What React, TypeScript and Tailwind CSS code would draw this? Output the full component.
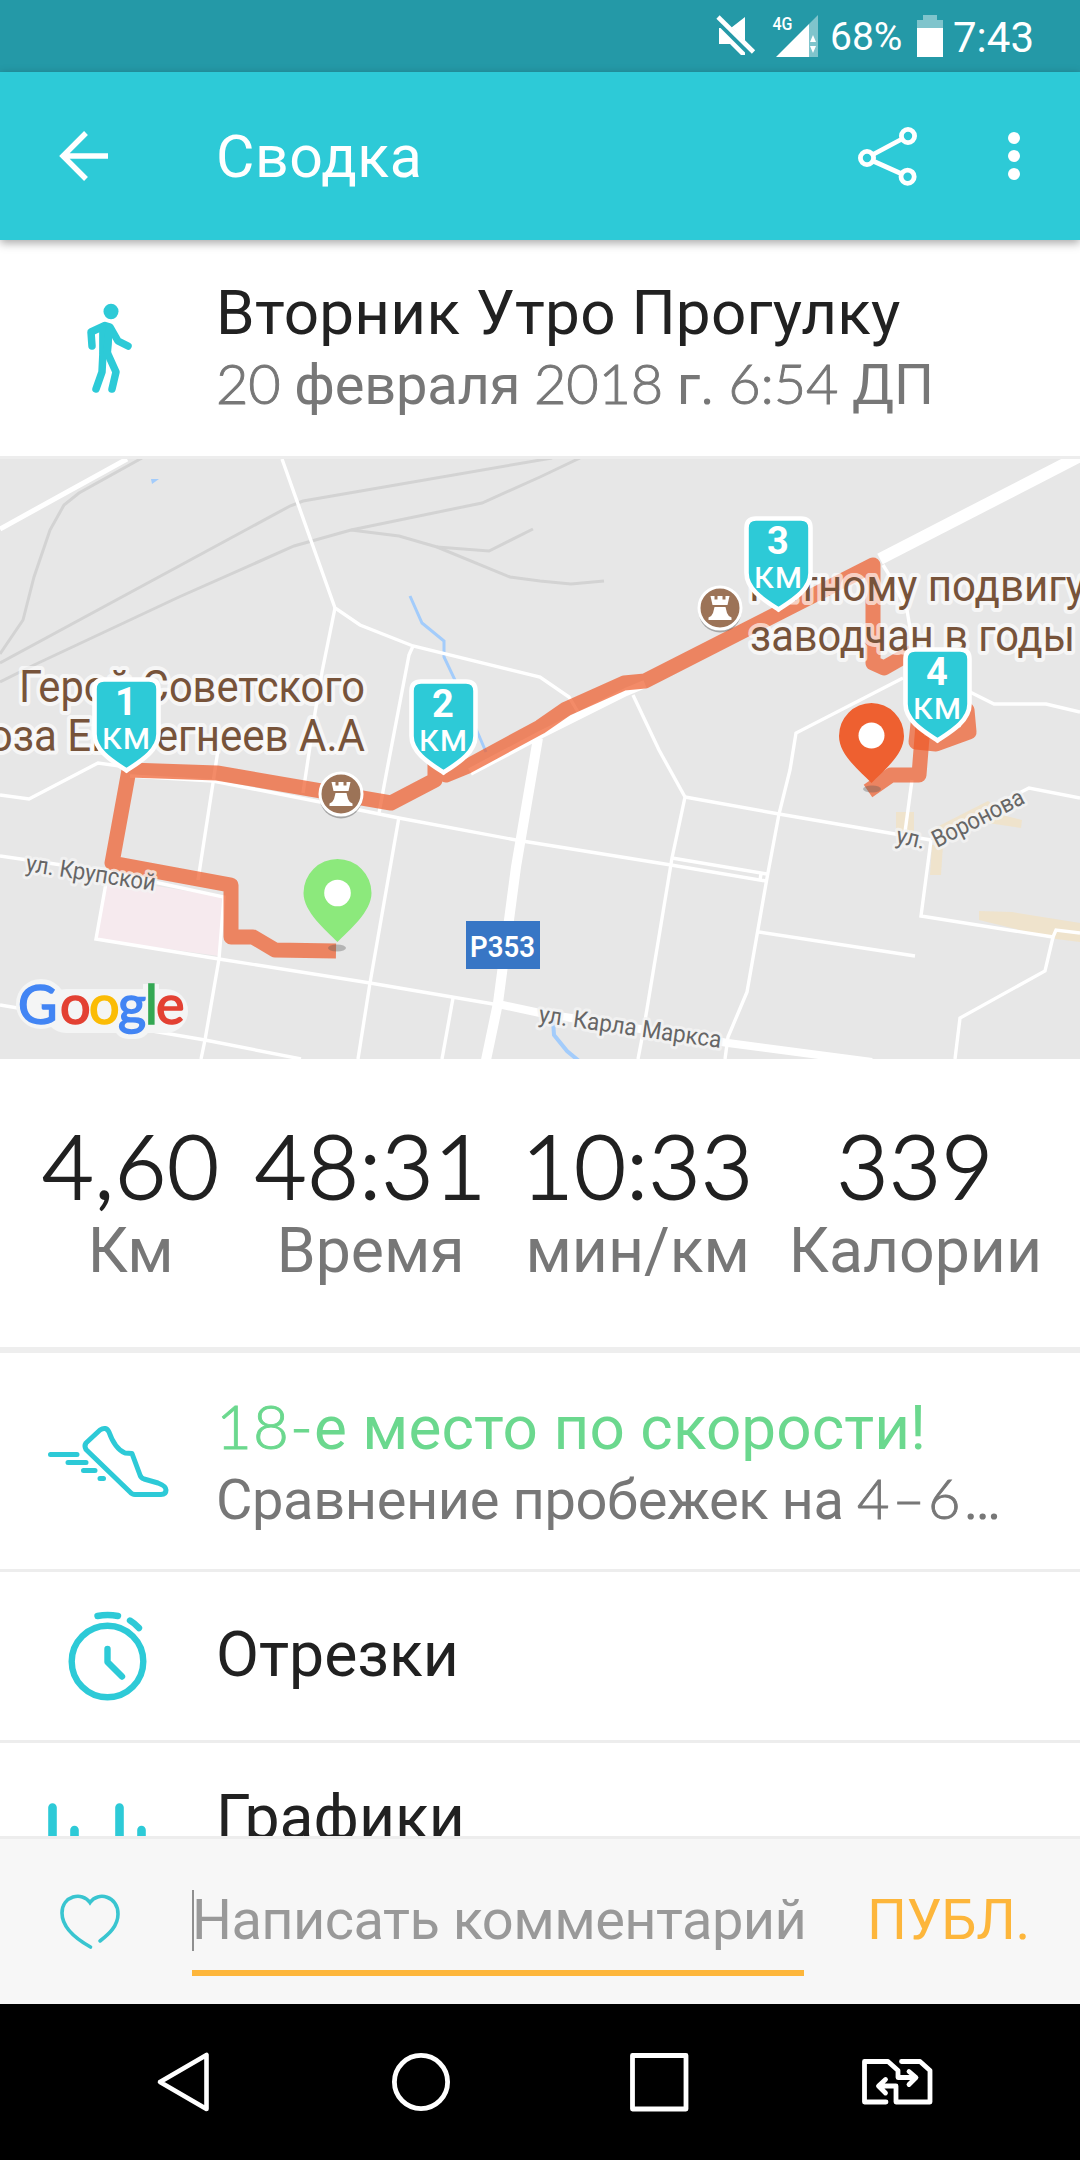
import { Fragment } from 'react'
import type { ReactNode } from 'react'

const TEAL = '#2dcad7'

// Digits and their punctuation use a lighter humanist face than the Cyrillic text
function Mixed({ text, tracking = '' }: { text: string; tracking?: string }) {
  return (
    <>
      {text.split(/([\d:,–-]+)/).map((part, i) =>
        i % 2 === 1 ? (
          <span key={i} className={`font-['Lato',sans-serif] font-light [-webkit-text-stroke:0.9px_currentColor] ${tracking}`}>{part}</span>
        ) : (
          <Fragment key={i}>{part}</Fragment>
        )
      )}
    </>
  )
}

function StatusBar() {
  return (
    <div className="flex h-[72px] shrink-0 items-center justify-end bg-[#2499a7] pr-[45px] text-white">
      <svg className="h-[72px] w-[116px]" viewBox="710 0 116 72">
        <path d="M745 17L731.500 27.500L745 41ZM719 28H720.500L745 52.500V55H741L730 44H719Z" fill="#fff" />
        <path d="M718 17L753.500 52" stroke="#fff" strokeWidth="4.600" />
        <text x="772.500" y="30" fontSize="18" fontWeight="500" fill="#fff" fontFamily="Roboto, sans-serif" textLength="20" lengthAdjust="spacingAndGlyphs">4G</text>
        <path d="M776 57L809 24V57Z" fill="#fff" />
        <path d="M809 24L818 15V57H809Z" fill="#fff" opacity=".42" />
        <path d="M810 42L813 35L816 42ZM810 46H816L813 53Z" fill="#fff" />
      </svg>
      <span className="w-[91px] pt-[3px] pl-1 text-[39px] leading-none whitespace-nowrap">68%</span>
      <svg className="h-[72px] w-[26px]" viewBox="917 0 26 72">
        <path d="M923 15H937V20H943V28H917V20H923Z" fill="#fff" opacity=".42" />
        <rect x="917" y="28" width="26" height="29" fill="#fff" />
      </svg>
      <span className="ml-[10px] w-[82px] pt-[3px] text-[42px] leading-none">7:43</span>
    </div>
  )
}

function Header() {
  return (
    <header className="relative z-10 flex h-[168px] shrink-0 items-center bg-[#2dcad7] text-white shadow-[0_3px_9px_rgba(0,0,0,0.35)]">
      <svg className="h-[168px] w-[216px]" viewBox="0 72 216 168" fill="none" stroke="#fff" strokeWidth="5.400">
        <path d="M108 156H64M86 133L63 156L86 179" />
      </svg>
      <h1 className="flex-1 text-[59px] leading-none tracking-[0.5px]">Сводка</h1>
      <svg className="h-[168px] w-[240px]" viewBox="840 72 240 168">
        <g fill="none" stroke="#fff" strokeWidth="4.800">
          <circle cx="867" cy="158" r="6.600" />
          <circle cx="908" cy="136" r="6.600" />
          <circle cx="907.600" cy="176.700" r="6.600" />
          <path d="M873 154.500L902 139M873 161L902 174" />
        </g>
        <g fill="#fff">
          <circle cx="1014" cy="138" r="6" />
          <circle cx="1014" cy="156" r="6" />
          <circle cx="1014" cy="174" r="6" />
        </g>
      </svg>
    </header>
  )
}

function KmPin({ x, y, n }: { x: number; y: number; n: number }) {
  return (
    <g transform={`translate(${x} ${y})`}>
      <path
        d="M-32 -84q0 -9.500 9.500 -9.500h45q9.500 0 9.500 9.500v45C32 -22 13 -11 0 -2.500C-13 -11 -32 -22 -32 -39Z"
        fill={TEAL}
        stroke="#fff"
        strokeWidth="4.600"
      />
      <text x="-.5" y="-58" fontSize="38" fontWeight="700" textAnchor="middle" fill="#fff">{n}</text>
      <text x="-25" y="-24" fontSize="38" fill="#fff" textLength="49" lengthAdjust="spacingAndGlyphs">км</text>
    </g>
  )
}

function Castle({ x, y }: { x: number; y: number }) {
  return (
    <g transform={`translate(${x} ${y})`}>
      <circle cy="3" r="21.500" fill="#000" opacity=".28" />
      <circle r="21" fill="#9c7357" stroke="#fff" strokeWidth="3" />
      <path d="M-9.500 -12h4v3.500h3v-3.500h5v3.500h3v-3.500h4l-2 9h-15ZM-5.500 -1h11l1.500 6q1 3 4.500 4.500v2.500h-23v-2.500q3.500 -1.500 4.500 -4.500Z" fill="#fff" />
    </g>
  )
}

function GoogleMark() {
  return (
    <g>
      <g fill="none" stroke="#f4f5f5" strokeLinecap="round" strokeLinejoin="round">
        <circle cx="41" cy="1004" r="12" strokeWidth="26" />
        <path d="M66 1011H166" strokeWidth="44" />
        <path d="M128 1024H136" strokeWidth="30" />
        <path d="M151 992V1010" strokeWidth="16" strokeLinecap="square" />
      </g>
      <text y="1023.500" fontSize="54" fontFamily="Lato, sans-serif" strokeWidth="1.600">
        <tspan x="18" fill="#4285f4" stroke="#4285f4">G</tspan>
        <tspan x="60" fill="#e34133" stroke="#e34133">o</tspan>
        <tspan x="89" fill="#fbbc05" stroke="#fbbc05">o</tspan>
        <tspan x="118" fill="#4285f4" stroke="#4285f4">g</tspan>
        <tspan x="145" fill="#34a853" stroke="#34a853">l</tspan>
        <tspan x="156" fill="#e34133" stroke="#e34133">e</tspan>
      </text>
    </g>
  )
}

function RouteMap() {
  return (
    <svg className="block h-[600px] w-full shrink-0" viewBox="0 459 1080 600" fontFamily="Roboto, sans-serif">
      <rect y="459" width="1080" height="600" fill="#e7e7e7" />

      {/* blocks */}
      <path d="M107 878L224 897L219 956L96 939Z" fill="#f6eaee" />
      <g fill="#efe3cc">
        <path d="M896 812H914V836H896Z" />
        <path d="M932 845H943L941 875H930Z" />
        <path d="M929 831L988 801L998 808L935 846Z" />
        <path d="M990 812L1022 820L1021 828L988 823Z" />
        <path d="M979 911L1012 912L1080 923V942L1056 939L979 920Z" />
      </g>

      {/* railways */}
      <g fill="none" stroke="#d3d3d3" strokeWidth="3">
        <path d="M142 458L79 493L64 505L50 530L34 577L23 620L0 654" />
        <path d="M0 663L290 506L303 501L552 458" />
        <path d="M0 682L34 665L179 597L294 546L351 530L482 503L540 477L580 458" />
        <path d="M351 530L399 536L437 547L510 577L540 581L571 584L604 581" />
        <path d="M437 547L489 551L533 529" />
      </g>

      {/* water */}
      <g fill="none" stroke="#a3ccfb" strokeWidth="3">
        <path d="M410 596L422 623L444 641V657L455 680L486 752" />
        <path d="M553 1020L554 1035L567 1051L579 1061" strokeWidth="4" />
      </g>
      <path d="M151 479H159L152 484Z" fill="#a3ccfb" />

      {/* streets */}
      <g fill="none" stroke="#fff" strokeWidth="3.400">
        <path d="M0 529L127 459" strokeWidth="5" />
        <path d="M282 459L335 608L360 625L413 646L540 677L569 697L578 712" />
        <path d="M335 608L322 672L315 713L303 793" />
        <path d="M413 646L409 655L387 770L379 813" />
        <path d="M0 795L29 799L98 763L127 767" />
        <path d="M130 776L213 781L320 802L399 818L516 840L671 865L766 881" />
        <path d="M218 750L213 783L198 880" />
        <path d="M399 817L370 983L358 1059" />
        <path d="M0 856L103 871L224 897L219 959L205 1040L201 1059" />
        <path d="M108 872L96 939L219 959L370 983L499 1005" />
        <path d="M0 1005L205 1040L301 1059" />
        <path d="M453 998L442 1059" />
        <path d="M633 695L659 750L685 797L672 858L643 1033L638 1059" />
        <path d="M685 797L779 814L901 835L931 840" />
        <path d="M903 678L796 733L790 770L779 814L767 878L747 992L728 1037L725 1059" />
        <path d="M672 858L767 874M761 874L760 880" />
        <path d="M759 932L915 956" />
        <path d="M970 692L994 704H1046L1080 712" />
        <path d="M883 565L888 573L907 610L912 640" />
        <path d="M912 780L905 832" />
        <path d="M931 840L921 916L1053 937L1056 930L1080 933" />
        <path d="M1053 937L1045 971L960 1018L955 1059" />
        <path d="M931 838L1029 788L1080 798" />
      </g>
      <g fill="none" stroke="#fff">
        <path d="M538 738L516 867L498 1003L486 1060" strokeWidth="10" />
        <path d="M470 772L540 735L626 692L645 684" strokeWidth="8" />
        <path d="M880 559L1082 455" strokeWidth="12" />
        <path d="M498 1004L540 1013L728 1043L872 1062" strokeWidth="8" />
      </g>

      {/* run route */}
      <g fill="none" stroke="#ee5a28" strokeOpacity=".7" strokeWidth="15" strokeLinejoin="round">
        <path d="M336 951L275 950L253 937H231V885L112 863L129 770L217 773L391 803L435 780V764L446 775L468 766L540 727L566 709L624 683L645 681L873 565V663L884 668L912 652" />
        <path d="M950 690L967 710L969 732L936 744L916 742L919 715" />
        <path d="M924 712L919 775H891L868 791" />
      </g>

      {/* places */}
      <g fontSize="44.500" fill="#77533a" stroke="#fff" strokeOpacity=".65" strokeWidth="8" strokeLinejoin="round" paintOrder="stroke">
        <text x="19" y="702" textLength="346" lengthAdjust="spacingAndGlyphs">Герой Советского</text>
        <text transform="translate(365 751) scale(.945 1)" textAnchor="end">Союза Евстегнеев А.А</text>
        <text transform="translate(749 601) scale(.945 1)">Ратному подвигу</text>
        <text x="750" y="651" textLength="325" lengthAdjust="spacingAndGlyphs">заводчан в годы</text>
      </g>
      <g fontSize="24" fill="#666" stroke="#f4f4f4" strokeOpacity=".8" strokeWidth="6" strokeLinejoin="round" paintOrder="stroke">
        <text transform="translate(25 871) rotate(8.800)" textLength="131" lengthAdjust="spacingAndGlyphs">ул. Крупской</text>
        <text transform="translate(538 1022) rotate(8.100)" textLength="184" lengthAdjust="spacingAndGlyphs">ул. Карла Маркса</text>
        <text transform="translate(895 843) rotate(12)" textLength="29" lengthAdjust="spacingAndGlyphs">ул.</text>
        <text transform="translate(937 848) rotate(-27)" textLength="100" lengthAdjust="spacingAndGlyphs">Воронова</text>
      </g>
      <rect x="466" y="921" width="74" height="48" fill="#3876c5" />
      <text x="470" y="956.500" fontSize="29" fontWeight="600" fill="#fff" textLength="65" lengthAdjust="spacingAndGlyphs">Р353</text>

      <Castle x={341} y={794} />
      <Castle x={720} y={608} />

      {/* start and finish */}
      <ellipse cx="337" cy="948" rx="9" ry="3.500" fill="#555" opacity=".35" />
      <path d="M337.500 942C326 930 303.500 912 303.500 893A34 34 0 0 1 371.500 893C371.500 912 349 930 337.500 942Z" fill="#8ce97c" />
      <circle cx="337.500" cy="893" r="13.300" fill="#fff" />
      <ellipse cx="872" cy="789" rx="9" ry="3.500" fill="#555" opacity=".35" />
      <path d="M871.500 783C860 771 839 755 839 736A32.500 33 0 0 1 904 736C904 755 883 771 871.500 783Z" fill="#ee6030" />
      <circle cx="871.500" cy="735.500" r="13" fill="#fff" />

      <KmPin x={126.5} y={773} n={1} />
      <KmPin x={443.5} y={775} n={2} />
      <KmPin x={778.5} y={612} n={3} />
      <KmPin x={937.5} y={743} n={4} />

      <GoogleMark />
    </svg>
  )
}

const stats = [
  { value: '4,60', label: 'Км' },
  { value: '48:31', label: 'Время' },
  { value: '10:33', label: 'мин/км' },
  { value: '339', label: 'Калории' },
]

function Stats() {
  return (
    <div className="flex h-[288px] shrink-0 justify-between pt-[64px] pr-[38px] pl-[42px]">
      {stats.map((s) => (
        <div key={s.label} className="flex flex-col items-center">
          <span className="font-['Lato',sans-serif] text-[89px] leading-[84px] font-light tracking-[0.8px] text-[#212121] [-webkit-text-stroke:1.8px_currentColor]">
            {s.value}
          </span>
          <span className="text-[62.5px] leading-[88px] text-[#777]">{s.label}</span>
        </div>
      ))}
    </div>
  )
}

function Row({ icon, height, children }: { icon: ReactNode; height: string; children: ReactNode }) {
  return (
    <div className={`flex shrink-0 items-center ${height}`}>
      <div className="h-full w-[216px] shrink-0">{icon}</div>
      <div className="min-w-0 flex-1 text-[#212121]">{children}</div>
    </div>
  )
}

function WalkIcon() {
  return (
    <svg className="h-full w-full" viewBox="0 240 216 216">
      <ellipse cx="111" cy="311.500" rx="7.500" ry="7.800" fill={TEAL} />
      <path d="M105 325L113 327L111 354L99.500 354L99.500 330Z" fill={TEAL} />
      <g fill="none" stroke={TEAL} strokeWidth="7.500" strokeLinecap="round" strokeLinejoin="round">
        <path d="M92 346L91 332L105 325.500L110 327L118 341L128 346" />
        <path d="M103 329V352L102 372L96 389" />
        <path d="M109 330L107 352L116 372L112 389" />
      </g>
    </svg>
  )
}

function ShoeIcon() {
  return (
    <svg className="h-full w-full" viewBox="0 1353 216 216" fill="none" stroke={TEAL} strokeWidth="5" strokeLinecap="round" strokeLinejoin="round">
      <path d="M86 1443L100 1430Q106 1426 109 1432Q115 1449 125 1453L132 1453.500L140 1475Q141 1478 144 1479L158 1483Q166 1486 166 1490Q166 1494.500 161 1494.500H135Q132 1494.500 130 1492L86 1449.500Q84 1446 86 1443Z" />
      <path d="M50.500 1454.500H77M68 1462.500H86M83.500 1470.500H95M100 1478.500H103.500" />
    </svg>
  )
}

function StopwatchIcon() {
  return (
    <svg className="h-full w-full" viewBox="0 1572 216 168" fill="none" stroke={TEAL} strokeWidth="6.400" strokeLinecap="round" strokeLinejoin="round">
      <circle cx="107.500" cy="1661.500" r="35.800" />
      <path d="M97.500 1616Q107.500 1614 118 1616M130 1620.500Q135 1623.500 139 1628M107.500 1649V1662L122 1676.500" />
    </svg>
  )
}

function ChartIcon() {
  return (
    <svg className="h-full w-full" viewBox="0 1743 216 168" fill="none" stroke={TEAL} strokeWidth="8.600" strokeLinecap="round">
      <path d="M52.500 1807.500V1850M74.500 1830V1850M119.500 1807.500V1850M141.500 1830V1850" />
    </svg>
  )
}

function CommentBar() {
  return (
    <div className="flex h-[168px] shrink-0 border-t-[3px] border-[#ededed] bg-[#f7f7f7]">
      <svg className="h-[165px] w-[192px] shrink-0" viewBox="0 1839 192 165" fill="none" stroke="#39c5d0" strokeWidth="3.600" strokeLinecap="round">
        <path d="M90.500 1947C78 1940 62 1929 62 1913C62 1896 82 1891 90 1902.500C98 1891 118 1896 118 1914C118 1926 109 1934 100 1941" />
      </svg>
      <div className="mt-[51px] flex h-[86px] w-[612px] shrink-0 items-start border-b-[6px] border-[#fdb63b]">
        <div className="h-[61px] w-[2px] shrink-0 bg-[#8f8f8f]" />
        <span className="-ml-[2px] text-[56px] leading-[60px] tracking-[-0.55px] whitespace-nowrap text-[#999]">Написать комментарий</span>
      </div>
      <span className="mt-[51px] ml-[63px] text-[56px] leading-[60px] tracking-[-0.4px] text-[#fdb63b]">ПУБЛ.</span>
    </div>
  )
}

function NavBar() {
  return (
    <nav className="flex h-[156px] shrink-0 items-center bg-black pl-[156px]">
      <svg className="h-[64px] w-[54px]" viewBox="156 2050 54 64" fill="none" stroke="#fff" strokeWidth="4.600" strokeLinejoin="round">
        <path d="M206.500 2055V2109L160 2082Z" />
      </svg>
      <svg className="ml-[179px] h-[64px] w-[64px]" viewBox="389 2050 64 64" fill="none" stroke="#fff" strokeWidth="4.800">
        <circle cx="421" cy="2082" r="26.600" />
      </svg>
      <svg className="ml-[174px] h-[64px] w-[64px]" viewBox="627 2050 64 64" fill="none" stroke="#fff" strokeWidth="4.800" strokeLinejoin="round">
        <rect x="632.500" y="2055.500" width="53.500" height="53.500" />
      </svg>
      <svg className="ml-[169px] h-[64px] w-[74px]" viewBox="860 2050 74 64" fill="none" stroke="#fff" strokeWidth="4.800" strokeLinecap="round" strokeLinejoin="round">
        <path d="M886 2102H864.500V2061.500H888L898 2070.500V2077.500H915M909 2071.500L916 2077.500L909 2084.500" />
        <path d="M901.500 2061.500H920L930 2070.500V2102H896V2086H879M885.500 2079.500L878.500 2086L885.500 2093" />
      </svg>
    </nav>
  )
}

function App() {
  return (
    <div className="flex h-[2160px] w-[1080px] flex-col overflow-hidden bg-white font-['Roboto',sans-serif]">
      <StatusBar />
      <Header />
      <main className="flex h-[1596px] shrink-0 flex-col overflow-hidden">
        <Row height="h-[216px]" icon={<WalkIcon />}>
          <div className="pt-[2px] text-[62px] leading-[70px] tracking-[0.25px] whitespace-nowrap">Вторник Утро Прогулку</div>
          <div className="text-[56px] leading-[70px] tracking-[-0.2px] whitespace-nowrap text-[#777]">
            <Mixed text="20 февраля 2018 г. 6:54 ДП" />
          </div>
        </Row>
        <div className="h-[3px] shrink-0 bg-[#ededed]" />
        <RouteMap />
        <Stats />
        <div className="h-[6px] shrink-0 bg-[#eee]" />
        <Row height="h-[216px]" icon={<ShoeIcon />}>
          <div className="pt-[2px] text-[62px] leading-[70px] tracking-[0.1px] whitespace-nowrap text-[#6bd88e]">
            <Mixed text="18-е место по скорости!" tracking="tracking-[1px]" />
          </div>
          <div className="text-[56px] leading-[70px] tracking-[-0.4px] whitespace-nowrap text-[#777]">
            <Mixed text="Сравнение пробежек на 4–6…" tracking="tracking-[3px]" />
          </div>
        </Row>
        <div className="h-[3px] shrink-0 bg-[#ededed]" />
        <Row height="h-[168px]" icon={<StopwatchIcon />}>
          <div className="pb-[4px] text-[62.5px] leading-[71px]">Отрезки</div>
        </Row>
        <div className="h-[3px] shrink-0 bg-[#ededed]" />
        <Row height="h-[168px]" icon={<ChartIcon />}>
          <div className="pb-[20px] text-[62.5px] leading-[71px]">Графики</div>
        </Row>
      </main>
      <CommentBar />
      <NavBar />
    </div>
  )
}

export default App
